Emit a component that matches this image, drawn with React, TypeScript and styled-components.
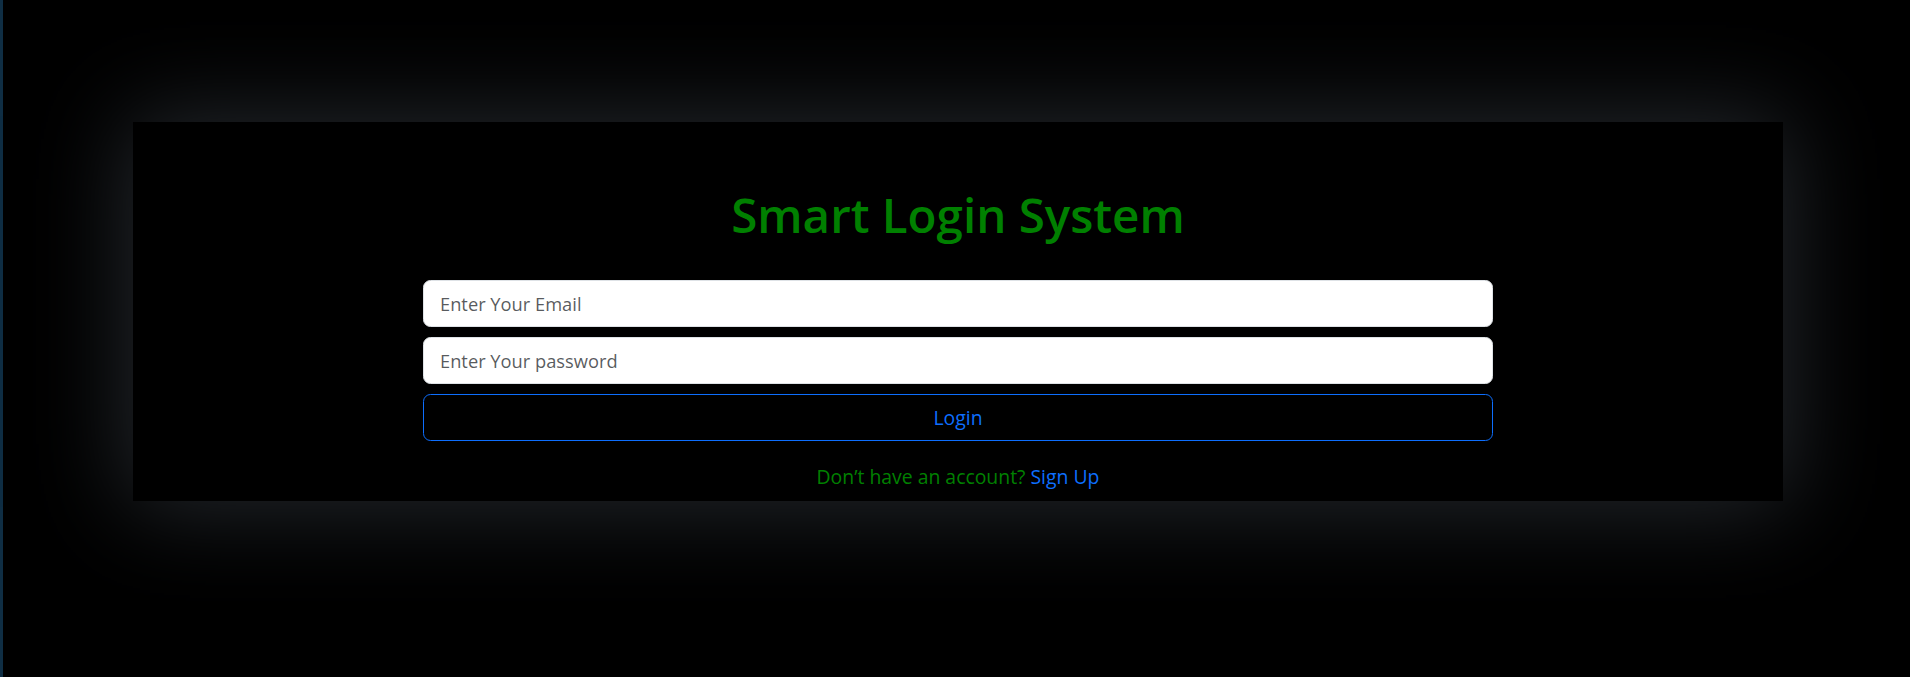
import React from 'react';
import styled, {createGlobalStyle} from 'styled-components';

const GlobalStyle = createGlobalStyle`
    * {
        box-sizing: border-box;
    }

    body {
        margin: 0;
        background: #000;
        font-family: "Open Sans", "Noto Sans", Arial, sans-serif;
    }
`;

const Page = styled.div`
    min-height: 100vh;
    background: #000;
    border-left: 3px solid #0f2e44;
    padding: 122px 0 0 130px;
`;

const Card = styled.section`
    width: 1650px;
    background: #000;
    padding: 64px 0 10px;
    box-shadow: 0 0 90px 6px #25292e;
`;

const Column = styled.div`
    width: 1070px;
    margin: 0 auto;
    display: flex;
    flex-direction: column;
`;

const Title = styled.h1`
    margin: 0 0 37px;
    text-align: center;
    color: #008000;
    font-size: 47.5px;
    font-weight: 600;
    line-height: 1.2;
`;

const Field = styled.input`
    display: block;
    width: 100%;
    height: 47px;
    margin-bottom: 10px;
    padding: 0 16px;
    font-family: inherit;
    font-size: 18.3px;
    color: #212529;
    background: #fff;
    border: 1px solid #dee2e6;
    border-radius: 7.5px;
    outline: none;

    &::placeholder {
        color: rgba(33, 37, 41, 0.75);
    }
`;

const LoginButton = styled.button`
    width: 100%;
    height: 47px;
    padding: 0;
    font-family: inherit;
    font-size: 19.4px;
    color: #0d6efd;
    background: transparent;
    border: 1px solid #0d6efd;
    border-radius: 7.5px;
    cursor: pointer;
`;

const Footer = styled.p`
    margin: 21px 0 0;
    text-align: center;
    color: #008000;
    font-size: 19.4px;
    line-height: 1.5;
`;

const Link = styled.a`
    color: #0d6efd;
    text-decoration: none;
`;

export default function App() {
    return (
        <>
            <GlobalStyle />
            <Page>
                <Card>
                    <Column>
                        <Title>Smart Login System</Title>
                        <Field type="email" placeholder="Enter Your Email" />
                        <Field type="password" placeholder="Enter Your password" />
                        <LoginButton>Login</LoginButton>
                        <Footer>
                            Don’t have an account? <Link href="#">Sign Up</Link>
                        </Footer>
                    </Column>
                </Card>
            </Page>
        </>
    );
}
